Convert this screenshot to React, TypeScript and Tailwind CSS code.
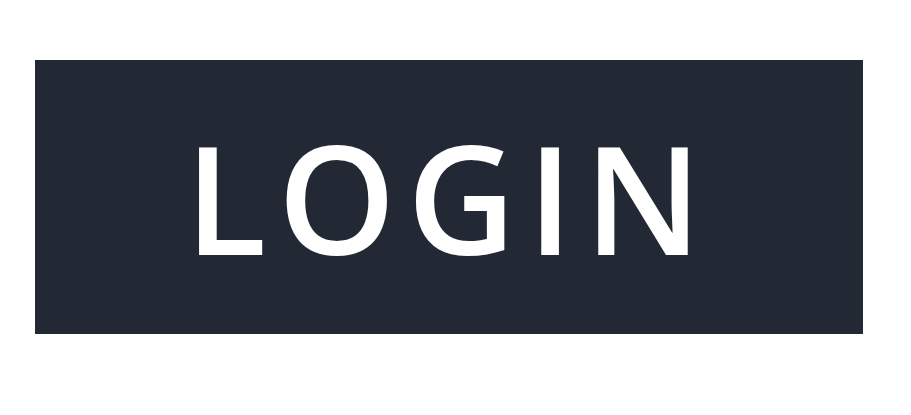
export default function App() {
  return (
    <div className="min-h-[415px] w-[911px] bg-white pt-[60px] pl-[35px]">
      <button
        type="button"
        className="flex h-[274px] w-[828px] items-center justify-center bg-[#222935] text-white"
      >
        <span
          className="text-[150px] leading-none tracking-[0.075em] font-semibold"
          style={{ fontFamily: '"Open Sans", "Noto Sans", sans-serif' }}
        >
          LOGIN
        </span>
      </button>
    </div>
  )
}
